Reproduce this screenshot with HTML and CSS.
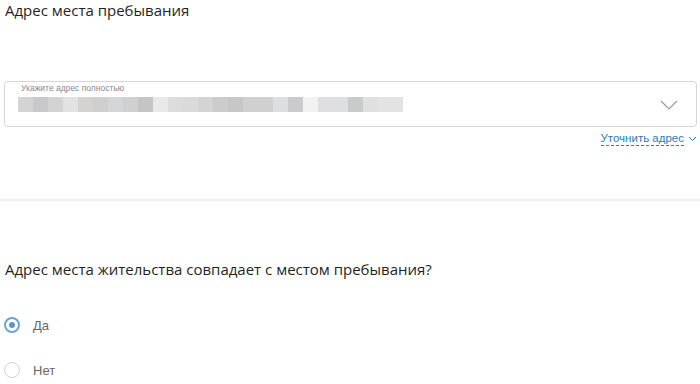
FILE: index.html
```html
<!DOCTYPE html>
<html lang="ru">
<head>
  <meta charset="UTF-8" />
  <title>Адрес места пребывания</title>
  <link rel="stylesheet" href="styles.css">
</head>
<body>
  <section class="block">
    <h2 class="title">Адрес места пребывания</h2>

    <div class="address-field">
      <div class="address-text">
        <div class="address-label">Укажите адрес полностью</div>
        <div class="blur">
          <span style="background:#d4d4d4"></span><span style="background:#c8c7ca"></span><span style="background:#d3d3d3"></span><span style="background:#e1e3e3"></span><span style="background:#d6d2d2"></span><span style="background:#cfcfcf"></span><span style="background:#d4d6d8"></span><span style="background:#d0d0d0"></span><span style="background:#c5c5c5"></span><span style="background:#e9e9e9"></span><span style="background:#dcdcdc"></span><span style="background:#dadada"></span><span style="background:#d4d4d4"></span><span style="background:#cccccf"></span><span style="background:#c8c7c8"></span><span style="background:#d0d0d0"></span><span style="background:#d0d0d0"></span><span style="background:#dcdfe0"></span><span style="background:#cacacf"></span><span style="background:#f2f2f2"></span><span style="background:#dfdfe1"></span><span style="background:#dedfe0"></span><span style="background:#c9cbcb"></span><span style="background:#e0e0e0"></span><span style="background:#e3e3e3"></span><span style="background:#e3e3e3"></span>
        </div>
      </div>
      <svg class="chevron" width="18" height="10" viewBox="0 0 18 10">
        <path d="M1 1 L9 9 L17 1" fill="none" stroke="#9a9a9a" stroke-width="1.2"/>
      </svg>
    </div>

    <div class="refine">
      <a href="#" class="refine-link">Уточнить адрес</a>
      <svg width="9" height="6" viewBox="0 0 9 6">
        <path d="M1 1 L4.5 4.5 L8 1" fill="none" stroke="#2a7ab8" stroke-width="1"/>
      </svg>
    </div>
  </section>

  <hr class="divider">

  <section class="block question">
    <h2 class="title">Адрес места жительства совпадает с местом пребывания?</h2>
    <div class="options">
      <label class="option">
        <span class="radio checked"></span>
        Да
      </label>
      <label class="option">
        <span class="radio"></span>
        Нет
      </label>
    </div>
  </section>
</body>
</html>
```

FILE: styles.css
```css
body { margin: 0; font-family: "Liberation Sans", Arial, sans-serif; color: #333; background: #fff; }
.block { padding: 0 3px 0 4px; }
.title { margin: 0; padding-left: 1px; font-family: "Open Sans", "Noto Sans", sans-serif; font-size: 15px; font-weight: normal; line-height: 20px; color: #1f1f1f; }

.address-field {
  margin-top: 61px; height: 46px; box-sizing: border-box;
  border: 1px solid #d6d6d6; border-radius: 4px;
  display: flex; align-items: center; justify-content: space-between;
  padding: 0 18px 0 13px;
}
.address-text { display: flex; flex-direction: column; align-self: flex-start; padding-top: 1px; }
.address-label { font-size: 8.5px; color: #8a8a8a; line-height: 11px; padding-left: 3px; }
.blur { display: flex; margin-top: 3px; height: 15px; }
.blur span { width: 15px; height: 15px; }
.blur span:last-child { width: 10px; }
.chevron { margin-top: 2px; }

.refine { display: flex; justify-content: flex-end; align-items: center; gap: 4px; margin-top: 5px; }
.refine-link { font-size: 11.5px; color: #2a7ab8; text-decoration: none; border-bottom: 1px dashed #2a7ab8; line-height: 13px; }

.divider { margin: 53px 0 0; border: none; height: 2px; background: #eff0f1; }

.question { padding-top: 58px; }
.options { margin-top: 38px; display: flex; flex-direction: column; gap: 29px; }
.option { display: flex; align-items: center; gap: 13px; font-size: 13px; color: #666; line-height: 15px; }
.radio { width: 16px; height: 16px; box-sizing: border-box; border-radius: 50%; border: 1px solid #d0d0d0; position: relative; }
.radio.checked { border: 2px solid #6fa5d6; }
.radio.checked::after { content: ""; position: absolute; left: 3px; top: 3px; width: 6px; height: 6px; border-radius: 50%; background: #5b97cf; }
```
